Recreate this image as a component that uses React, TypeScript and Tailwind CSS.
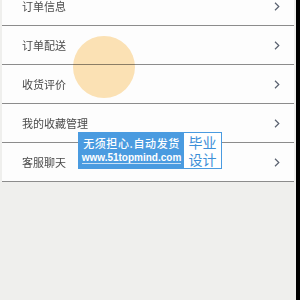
const items = ["订单信息", "订单配送", "收货评价", "我的收藏管理", "客服聊天"];

function Chevron() {
  return (
    <svg width="6" height="9" viewBox="0 0 6 9" className="shrink-0">
      <path d="M1 0.8 L4.8 4.5 L1 8.2" fill="none" stroke="#5a6270" strokeWidth="1.2" />
    </svg>
  );
}

export default function App() {
  return (
    <div
      className="relative flex h-[300px] w-[300px] overflow-hidden bg-black"
      style={{ fontFamily: '"Noto Sans CJK SC", "Liberation Sans", sans-serif' }}
    >
      <div className="h-full w-[296px] bg-[#efefed] px-[2px]">
        <div className="mt-[-12px] w-[292px] bg-[#fdfdfd]">
          {items.map((label, i) => (
            <div
              key={label}
              className={`flex items-center justify-between border-b border-[#8c8c8c] pl-[20px] pr-[14px] ${
                i === 0 ? "h-[38px]" : "h-[39px]"
              }`}
            >
              <span className="text-[11px] text-[#4a4a4a]">{label}</span>
              <Chevron />
            </div>
          ))}
        </div>
      </div>

      {/* touch ripple */}
      <div className="pointer-events-none absolute left-[73px] top-[36px] h-[62px] w-[62px] rounded-full bg-[#fde3b6] mix-blend-multiply" />

      {/* watermark */}
      <div className="absolute left-[78px] top-[132px] flex h-[37px] w-[144px] border border-[#4a9be0] bg-[#4a9be0]">
        <div className="flex w-[105px] flex-col items-center justify-center leading-none text-white">
          <span className="text-[11px] font-medium tracking-[0.6px]">无须担心.自动发货</span>
          <span
            className="mt-[4px] border-b border-white/70 text-[10px] font-bold"
            style={{ fontFamily: '"Liberation Sans", sans-serif' }}
          >
            www.51topmind.com
          </span>
        </div>
        <div className="flex flex-1 flex-col items-center justify-center bg-white text-[14px] leading-[17px] text-[#3d8fd8]">
          <span>毕业</span>
          <span>设计</span>
        </div>
      </div>
    </div>
  );
}
